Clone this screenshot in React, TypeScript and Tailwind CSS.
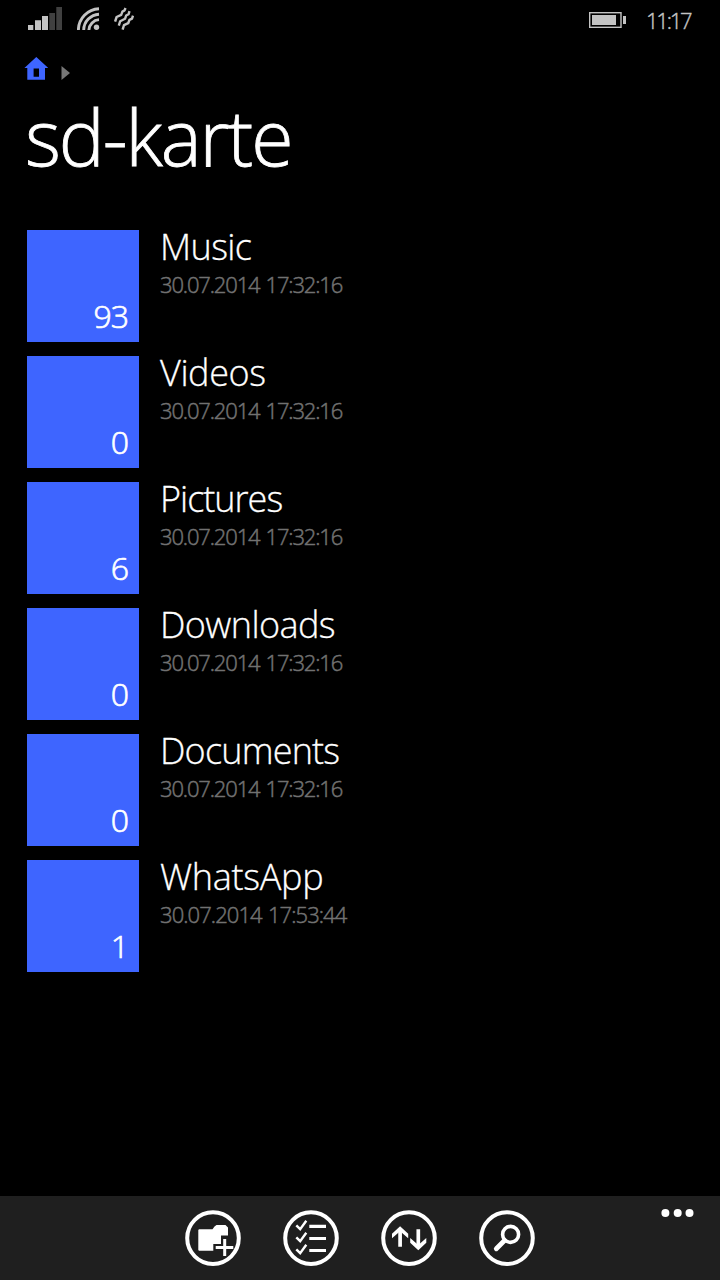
import { clsx } from "clsx";

const folders = [
  { name: "Music", count: 93, date: "30.07.2014 17:32:16", tracking: "tracking-[-0.6px]", dateTracking: "tracking-[-1.15px]" },
  { name: "Videos", count: 0, date: "30.07.2014 17:32:16", tracking: "tracking-[-0.4px]", dateTracking: "tracking-[-1.15px]" },
  { name: "Pictures", count: 6, date: "30.07.2014 17:32:16", tracking: "tracking-[-1px]", dateTracking: "tracking-[-1.15px]" },
  { name: "Downloads", count: 0, date: "30.07.2014 17:32:16", tracking: "tracking-[-0.6px]", dateTracking: "tracking-[-1.15px]" },
  { name: "Documents", count: 0, date: "30.07.2014 17:32:16", tracking: "tracking-[-0.8px]", dateTracking: "tracking-[-1.15px]" },
  { name: "WhatsApp", count: 1, date: "30.07.2014 17:53:44", tracking: "tracking-[-0.3px]", dateTracking: "tracking-[-0.93px]" },
] as const;

function SignalIcon() {
  return (
    <svg className="h-[23px] w-[34px]" viewBox="0 0 34 23">
      <path d="M0 18h5.3v5H0zM7 13.3h6V23H7zM14 9h6v14h-6z" fill="#c3c3c3" />
      <path d="M21.3 6H27v17h-5.7zM28.3 0H34v23h-5.7z" fill="#404040" />
    </svg>
  );
}

function WifiIcon() {
  return (
    <svg className="h-[23px] w-[23px]" viewBox="0 0 23 23" fill="none" stroke="#c3c3c3" strokeWidth="2.9">
      <path d="M1.4 23A21.5 21.5 0 0 1 22 1.7M6.7 23A16.2 16.2 0 0 1 22 7.2M11.9 23A11 11 0 0 1 22 12.6" />
      <circle cx="19.5" cy="20.3" r="2.7" fill="#c3c3c3" stroke="none" />
    </svg>
  );
}

function VibrateIcon() {
  return (
    <svg className="h-[23px] w-[20px]" viewBox="0 0 20 23" fill="none" stroke="#c3c3c3" strokeWidth="2.4" strokeLinejoin="round">
      <path d="M1.1 14.5L2.6 10L7.2 7.8L8.4 4.6L10.6 3.4L11.5 1" />
      <path d="M4.8 18.6L6.2 14.2L11 11.8L12.2 8.5L14.6 7.2L15.5 4.2" />
      <path d="M8.6 22.6L10 18.2L14.2 16.2L15.5 12.8L18 11.6L19 8.6" />
    </svg>
  );
}

function BatteryIcon() {
  return (
    <svg className="h-4 w-[37px]" viewBox="0 0 37 16">
      <rect x="0.7" y="0.7" width="31.3" height="14.6" fill="none" stroke="#c3c3c3" strokeWidth="1.4" />
      <path d="M3 3h24v10H3zM34 4h3v8h-3z" fill="#c3c3c3" />
    </svg>
  );
}

function HomeIcon() {
  return (
    <svg className="h-[23px] w-6" viewBox="0 0 24 23">
      <path d="M12.3 0L24.2 11H21V22.7H3.3V11H0.4zM9.6 11.5V19.7H15V11.5z" fill="#3e65ff" fillRule="evenodd" />
    </svg>
  );
}

function BarButton({ children, label }: { children: React.ReactNode; label: string }) {
  return (
    <button aria-label={label} className="size-14">
      <svg className="size-14" viewBox="0 0 56 56" fill="none" stroke="#fff">
        <circle cx="28" cy="28.1" r="25.8" strokeWidth="4" />
        {children}
      </svg>
    </button>
  );
}

export default function App() {
  return (
    <div className="flex h-[1280px] w-[720px] flex-col overflow-hidden bg-black font-['Open_Sans','Noto_Sans',sans-serif] font-light text-white">
      <header className="flex h-[50px] shrink-0 items-start pl-7 pr-[29px] pt-[7px]">
        <SignalIcon />
        <div className="ml-[15px]">
          <WifiIcon />
        </div>
        <div className="ml-[14px]">
          <VibrateIcon />
        </div>
        <div className="ml-auto mt-[5px]">
          <BatteryIcon />
        </div>
        <span className="ml-[20px] mt-[-2px] w-[45px] whitespace-nowrap text-[22px] leading-[30px] tracking-[-2.2px] text-[#c3c3c3] [-webkit-text-stroke:0.4px]">11:17</span>
      </header>

      <nav className="flex h-[45px] shrink-0 items-start pl-[24px] pt-[7px]">
        <HomeIcon />
        <svg className="ml-[13px] mt-[9px] h-[14px] w-[9px]" viewBox="0 0 9 14">
          <path d="M0.5 0L9 7L0.5 14z" fill="#777" />
        </svg>
      </nav>

      <h1 className="mt-[-3px] h-[138px] shrink-0 whitespace-nowrap pl-[25px] text-[77px] leading-[90px] tracking-[-2px] [-webkit-text-stroke:0.8px]">sd-karte</h1>

      <main className="flex grow flex-col gap-[14px] pl-[27px]">
        {folders.map((f) => (
          <div key={f.name} className="flex h-28 shrink-0">
            <div className="flex w-28 items-end justify-end bg-[#3e65ff] pb-1 pr-[11px] text-[32px] leading-[44px] tracking-[-1px] [-webkit-text-stroke:0.7px]">
              {f.count}
            </div>
            <div className="whitespace-nowrap pl-[21px]">
              <p className={clsx("h-9 text-[36px] leading-[34px] [-webkit-text-stroke:0.3px]", f.tracking)}>{f.name}</p>
              <p className={clsx("text-[22px] leading-[36px] text-[#717171] [word-spacing:1.5px] [-webkit-text-stroke:0.5px]", f.dateTracking)}>{f.date}</p>
            </div>
          </div>
        ))}
      </main>

      <footer className="flex h-[84px] shrink-0 items-start bg-[#1f1f1f] pl-[185px] pt-[14px]">
        <div className="flex gap-[42px]">
          <BarButton label="Neuer Ordner">
            <path d="M13.3 20L14 19.3H27.5L29.5 16.5L31.5 15H40.5L43 17.5V25.5H36V34H28.3V40.7H14L13.3 40z" fill="#fff" stroke="none" />
            <path d="M30.7 37.6H48.3M39.7 29V46" strokeWidth="3" />
          </BarButton>
          <BarButton label="Auswählen">
            <path d="M26.3 16.3H43M26.3 28.5H43M26.3 40.5H43" strokeWidth="3.2" />
            <path d="M13.3 15.3L17.2 19.2L23.3 10.7M13.3 27.3L17.2 31.2L23.3 22.7M13.3 39.3L17.2 43.2L23.3 34.7" strokeWidth="2.4" />
          </BarButton>
          <BarButton label="Sortieren">
            <path d="M19.1 36.7V19M37.3 19.3V37" strokeWidth="3.7" />
            <path d="M19.1 16.2L27.2 23.7V28.3L19.1 21.3L11 28.3V23.7zM29.2 28L37.3 35L45.3 28V32.8L37.3 40.3L29.2 32.8z" fill="#fff" stroke="none" />
          </BarButton>
          <BarButton label="Suchen">
            <circle cx="31.6" cy="24.4" r="8" strokeWidth="3.6" />
            <path d="M25.5 30.5L17.3 38.7" strokeWidth="4.8" strokeLinecap="round" />
          </BarButton>
        </div>
        <svg className="ml-auto mr-[26px] mt-[-1px] h-2 w-[33px]" viewBox="0 0 33 8" fill="#fff">
          <circle cx="4.4" cy="4" r="4" />
          <circle cx="16.7" cy="4" r="4" />
          <circle cx="28.5" cy="4" r="4" />
        </svg>
      </footer>
    </div>
  );
}
